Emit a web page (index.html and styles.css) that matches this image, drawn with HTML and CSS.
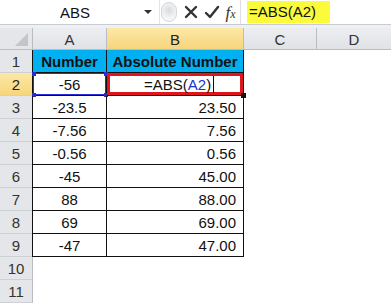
FILE: index.html
```html
<!DOCTYPE html>
<html lang="en">
<head>
    <meta charset="UTF-8">
    <title>ABS</title>
    <link rel="stylesheet" href="styles.css">
</head>
<body>
    <div class="formula-bar">
        <div class="name-box">
            <span class="name">ABS</span>
            <span class="drop"></span>
        </div>
        <div class="splitter"></div>
        <div class="buttons">
            <svg class="btn" width="16" height="16" viewBox="0 0 16 16">
                <path d="M3 3 L13 13 M13 3 L3 13" stroke="#333" stroke-width="2.4" stroke-linecap="round"/>
            </svg>
            <svg class="btn" width="16" height="16" viewBox="0 0 16 16">
                <path d="M2 9 L6 13 L14 3" stroke="#333" stroke-width="2.4" fill="none" stroke-linecap="round" stroke-linejoin="round"/>
            </svg>
            <span class="fx">f<small>x</small></span>
        </div>
        <div class="formula">
            <span class="hl">=ABS(A2)</span>
        </div>
    </div>
    <div class="strip"></div>

    <div class="sheet">
        <div class="corner"><span class="tri"></span></div>
        <div class="col-head">A</div>
        <div class="col-head sel">B</div>
        <div class="col-head">C</div>
        <div class="col-head last">D</div>

        <div class="row-head">1</div>
        <div class="cell t head first">Number</div>
        <div class="cell t head">Absolute Number</div>
        <div class="cell"></div>
        <div class="cell"></div>

        <div class="row-head sel">2</div>
        <div class="cell t ctr first ref">-56<i class="h tl"></i><i class="h tr"></i><i class="h bl"></i><i class="h br"></i></div>
        <div class="cell t edit">=ABS(<span class="blue">A2</span>)<span class="caret"></span><i class="fill"></i></div>
        <div class="cell"></div>
        <div class="cell"></div>

        <div class="row-head">3</div>
        <div class="cell t ctr first">-23.5</div>
        <div class="cell t num">23.50</div>
        <div class="cell"></div>
        <div class="cell"></div>

        <div class="row-head">4</div>
        <div class="cell t ctr first">-7.56</div>
        <div class="cell t num">7.56</div>
        <div class="cell"></div>
        <div class="cell"></div>

        <div class="row-head">5</div>
        <div class="cell t ctr first">-0.56</div>
        <div class="cell t num">0.56</div>
        <div class="cell"></div>
        <div class="cell"></div>

        <div class="row-head">6</div>
        <div class="cell t ctr first">-45</div>
        <div class="cell t num">45.00</div>
        <div class="cell"></div>
        <div class="cell"></div>

        <div class="row-head">7</div>
        <div class="cell t ctr first">88</div>
        <div class="cell t num">88.00</div>
        <div class="cell"></div>
        <div class="cell"></div>

        <div class="row-head">8</div>
        <div class="cell t ctr first">69</div>
        <div class="cell t num">69.00</div>
        <div class="cell"></div>
        <div class="cell"></div>

        <div class="row-head">9</div>
        <div class="cell t ctr first">-47</div>
        <div class="cell t num">47.00</div>
        <div class="cell"></div>
        <div class="cell"></div>

        <div class="row-head">10</div>
        <div class="cell"></div>
        <div class="cell"></div>
        <div class="cell"></div>
        <div class="cell"></div>

        <div class="row-head">11</div>
        <div class="cell"></div>
        <div class="cell"></div>
        <div class="cell"></div>
        <div class="cell"></div>
    </div>
</body>
</html>
```

FILE: styles.css
```css
* {
    margin: 0;
    padding: 0;
    box-sizing: border-box;
}

body {
    background: #fff;
    font-family: "Liberation Sans", Arial, sans-serif;
    font-size: 15px;
    color: #111;
    width: 391px;
    height: 303px;
    overflow: hidden;
}

.formula-bar {
    display: flex;
    height: 25px;
    border-bottom: 1px solid #c8ccd2;
    background: #fff;
}

.name-box {
    width: 160px;
    display: flex;
    align-items: center;
    border-right: 1px solid #e2e4e8;
}

.name {
    flex: 1;
    text-align: center;
    padding-left: 6px;
}

.drop {
    width: 0;
    height: 0;
    border-left: 4px solid transparent;
    border-right: 4px solid transparent;
    border-top: 4px solid #333;
    margin-right: 7px;
}

.splitter {
    width: 16px;
    height: 20px;
    margin: 2px 2px 0 1px;
    border-radius: 8px;
    border: 1px solid #d4d6da;
    background: radial-gradient(circle at 50% 40%, #d8dadd 0, #eceef0 45%, #f7f7f8 70%);
}

.buttons {
    width: 62px;
    display: flex;
    align-items: center;
    justify-content: space-around;
    padding: 0 2px;
    border-right: 1px solid #dcdfe3;
}

.fx {
    font-family: "Liberation Serif", serif;
    font-style: italic;
    font-size: 17px;
    color: #333;
    line-height: 1;
}

.fx small {
    font-size: 12px;
}

.formula {
    flex: 1;
    padding: 1px 0 0 6px;
}

.hl {
    display: inline-block;
    background: #fbfb3c;
    height: 22px;
    line-height: 22px;
    padding: 0 14px 0 2px;
}

.strip {
    height: 3px;
    background: #eef0f3;
}

.sheet {
    display: grid;
    grid-template-columns: 33px 74px 137px 73px 74px;
    grid-template-rows: 22px repeat(11, 23px);
}

.corner {
    background: #e4e6e9;
    border-right: 1px solid #b9bdc3;
    border-bottom: 1px solid #b9bdc3;
    position: relative;
}

.tri {
    position: absolute;
    right: 4px;
    bottom: 3px;
    width: 0;
    height: 0;
    border-left: 13px solid transparent;
    border-bottom: 13px solid #c2c5ca;
}

.col-head {
    background: linear-gradient(#eceef1, #e0e2e6);
    border-right: 1px solid #b9bdc3;
    border-bottom: 1px solid #b9bdc3;
    display: flex;
    align-items: center;
    justify-content: center;
    color: #333;
    padding-top: 2px;
}

.col-head.sel, .row-head.sel {
    background: linear-gradient(#fce8a6, #f7d57c);
    color: #222;
}

.col-head.last {
    border-right: none;
}

.row-head {
    background: #e4e6e9;
    border-right: 1px solid #b9bdc3;
    border-bottom: 1px solid #cdd0d5;
    display: flex;
    align-items: center;
    justify-content: center;
    color: #333;
}

.cell {
    display: flex;
    align-items: center;
    position: relative;
    white-space: nowrap;
}

.cell.t {
    border-right: 1px solid #111;
    border-bottom: 1px solid #111;
}

.cell.first {
    border-left: 1px solid #111;
    margin-left: -1px;
}

.cell.head {
    background: #00b0f0;
    font-weight: bold;
    justify-content: center;
    font-size: 15px;
}

.ctr {
    justify-content: center;
}

.num {
    justify-content: flex-end;
    padding-right: 7px;
}

.ref {
    box-shadow: inset 0 0 0 1px #2a2ad8;
}

.h {
    position: absolute;
    width: 4px;
    height: 4px;
    background: #2a2ad8;
}

.h.tl { left: -1px; top: -1px; }
.h.tr { right: -2px; top: -1px; }
.h.bl { left: -1px; bottom: -2px; }
.h.br { right: -2px; bottom: -2px; }

.edit {
    padding-left: 37px;
    box-shadow: inset 0 0 0 3px #e0161f;
}

.blue {
    color: #2233cc;
}

.caret {
    display: inline-block;
    width: 1px;
    height: 17px;
    background: #111;
    margin-left: 2px;
}

.fill {
    position: absolute;
    right: -3px;
    bottom: -3px;
    width: 5px;
    height: 5px;
    background: #111;
}
```
